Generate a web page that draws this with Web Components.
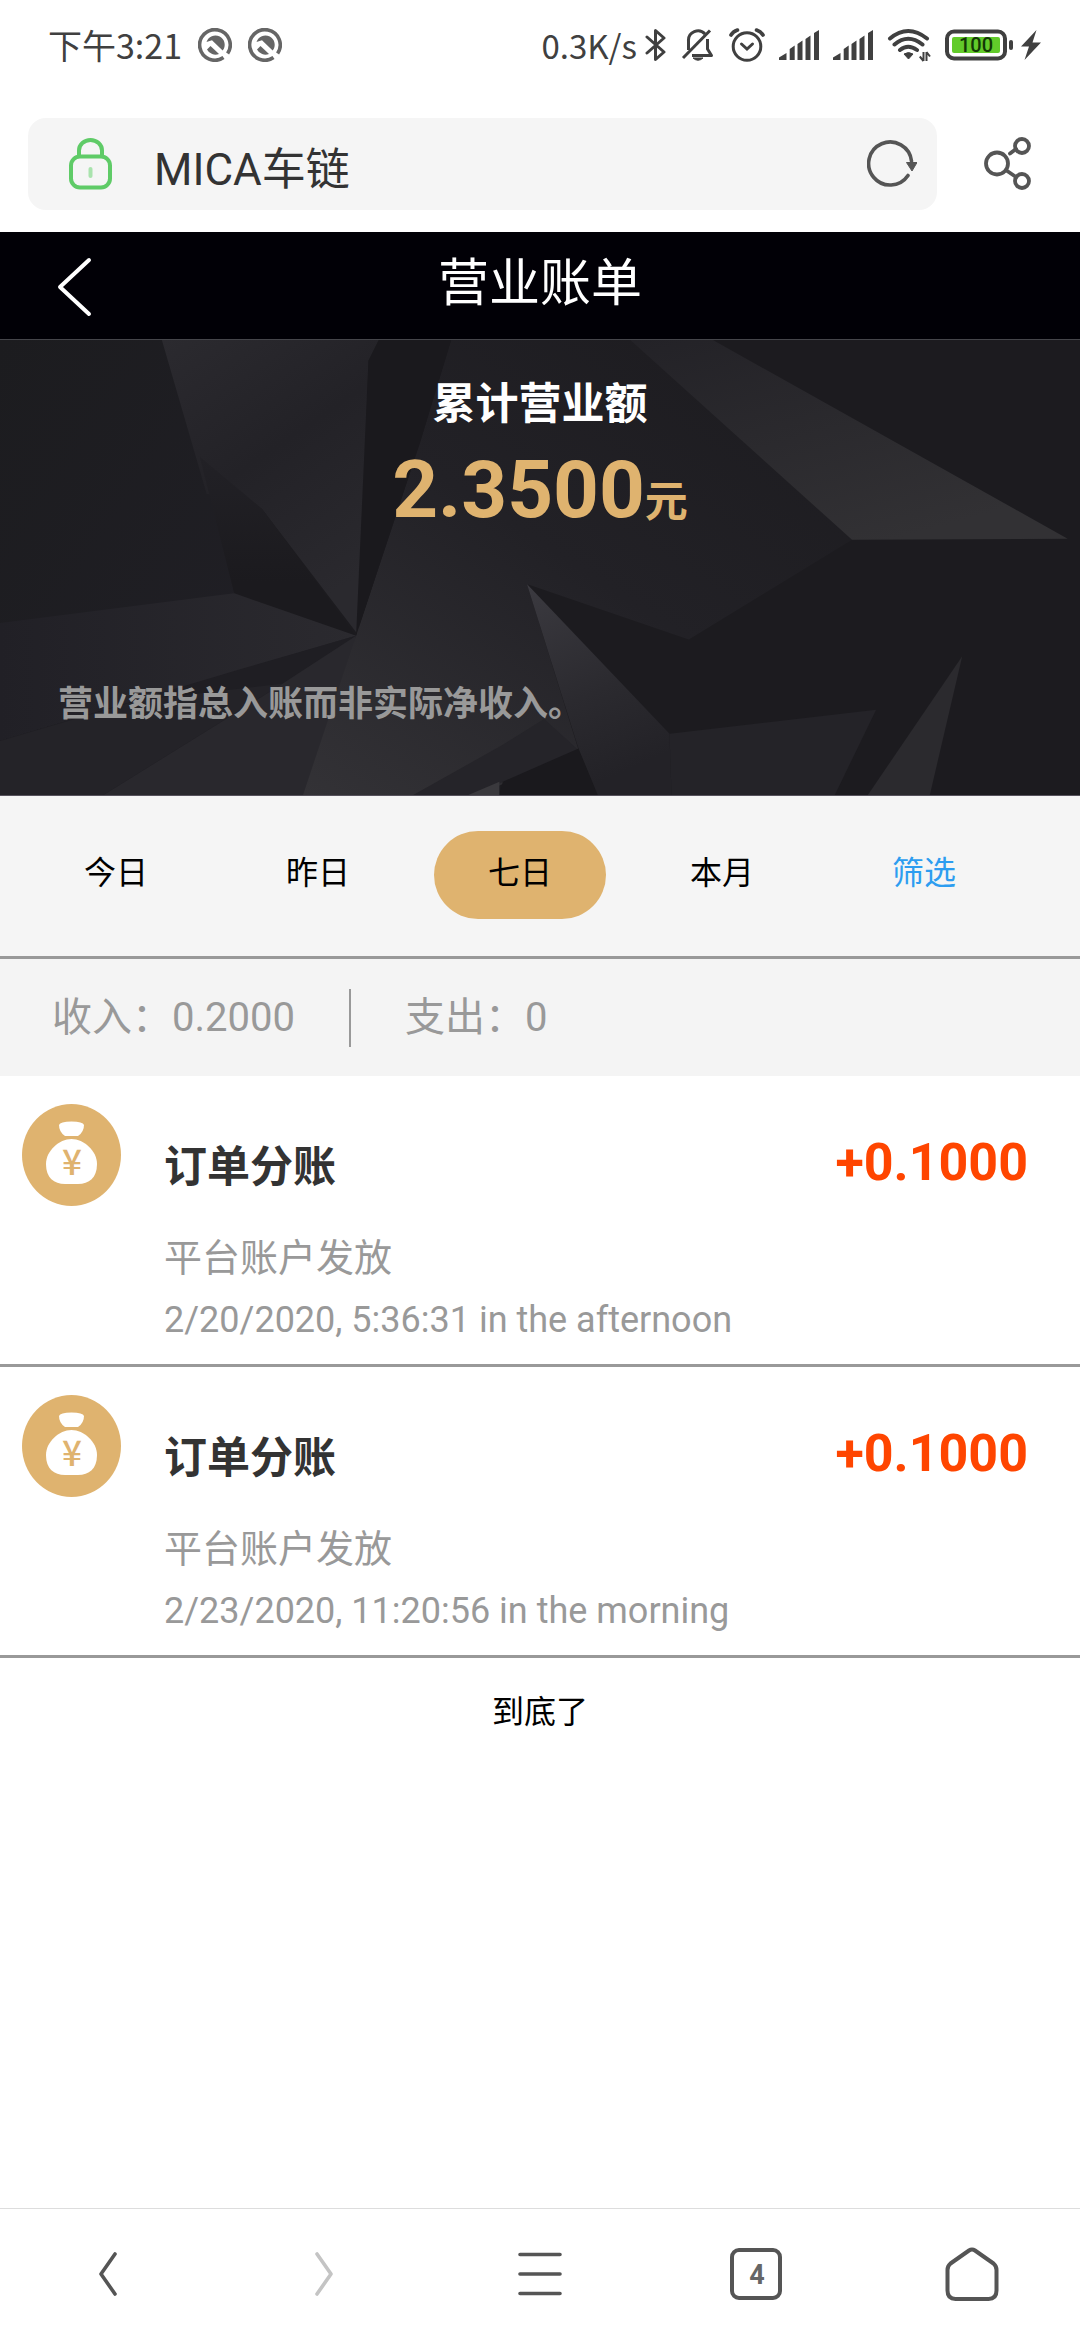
<!DOCTYPE html>
<html lang="zh-CN">
<head>
<meta charset="utf-8">
<meta name="viewport" content="width=device-width, initial-scale=1">
<title>营业账单</title>
<style>
  body { margin: 0; background: #fff; font-family: Roboto, "Noto Sans CJK SC", sans-serif; }
</style>
</head>
<body>
<bill-app></bill-app>
<script>
const define = (name, html) => {
  const template = document.createElement('template');
  template.innerHTML = '<style>*{box-sizing:border-box}button{border:0;padding:0;margin:0;background:none;font:inherit;color:inherit}svg{display:block}</style>' + html;
  customElements.define(name, class extends HTMLElement {
    constructor() {
      super();
      this.attachShadow({ mode: 'open' }).append(template.content.cloneNode(true));
    }
  });
};

define('status-bar', `
<style>
  :host { display: flex; align-items: center; justify-content: space-between; height: 90px; padding: 0 39px 0 48px;
    font: 33px/48px "Noto Sans CJK SC", sans-serif; color: #404040; }
  .side { display: flex; align-items: center; }
  .left { gap: 16px; font-size: 34px; }
  .right { gap: 14px; }
  .net { display: flex; align-items: center; gap: 8px; }
  .power { display: flex; align-items: center; gap: 8px; }
</style>
<div class="side left">
  <span>下午3:21</span>
  <svg width="34" height="34" viewBox="0 0 34 34"><path d="M25.5 29.6A15.3 15.3 0 1 1 29.6 25.5" fill="none" stroke="#666" stroke-width="3.6"/><path d="M8.5 14A9.3 9.3 0 1 1 24.6 22.6L14 12.3Z" fill="#666"/><path d="M12.5 18L21 26A9.5 9.5 0 0 1 9 21.5Z" fill="#666"/></svg>
  <svg width="34" height="34" viewBox="0 0 34 34"><path d="M25.5 29.6A15.3 15.3 0 1 1 29.6 25.5" fill="none" stroke="#666" stroke-width="3.6"/><path d="M8.5 14A9.3 9.3 0 1 1 24.6 22.6L14 12.3Z" fill="#666"/><path d="M12.5 18L21 26A9.5 9.5 0 0 1 9 21.5Z" fill="#666"/></svg>
</div>
<div class="side right">
  <div class="net"><span>0.3K/s</span>
  <svg width="22" height="34" viewBox="0 0 22 34" fill="none" stroke="#404040" stroke-width="3" stroke-linejoin="round" stroke-linecap="round"><path d="M2 9L19 24L10.5 31.5V2.5L19 10L2 25"/></svg></div>
  <svg width="34" height="34" viewBox="0 0 34 34" fill="none" stroke="#404040" stroke-width="3" stroke-linejoin="round"><path d="M7.500 22V13A9.500 9.500 0 0 1 24 6"/><path d="M26.500 11V21L30.500 27.500H11"/><path d="M2 30L29 2.500"/><path d="M12 30H22Q17 34.500 12 30Z" fill="#404040" stroke-width="1"/></svg>
  <svg width="36" height="34" viewBox="0 0 36 34" fill="none" stroke="#404040" stroke-width="3" stroke-linecap="round"><circle cx="18" cy="18.500" r="13.800"/><path d="M12.500 16L18 21L23.500 16"/><path d="M2 7Q4 3.500 8.500 2M34 7Q32 3.500 27.500 2" stroke-width="3.600"/></svg>
  <svg width="40" height="30" viewBox="0 0 40 30" fill="#404040"><path d="M0 30V27.500L7.500 23V30ZM10.700 19L15.700 15.500V30H10.700ZM18.500 14L23.500 10.500V30H18.500ZM26.500 9L31.500 5.500V30H26.500ZM35 3L40 0V30H35Z"/></svg>
  <svg width="40" height="30" viewBox="0 0 40 30" fill="#404040"><path d="M0 30V27.500L7.500 23V30ZM10.700 19L15.700 15.500V30H10.700ZM18.500 14L23.500 10.500V30H18.500ZM26.500 9L31.500 5.500V30H26.500ZM35 3L40 0V30H35Z"/></svg>
  <svg width="44" height="34" viewBox="0 0 44 34"><g fill="none" stroke="#404040" stroke-width="4" stroke-linecap="round"><path d="M3 10.500Q21 -4.500 40 10.500M7.500 16.500Q21 5 35.500 16.500M13 22Q21 15.500 30 22"/></g><path d="M17 26Q21.500 23 26 26L21.500 31Z" fill="#404040" stroke="#404040" stroke-linejoin="round"/><path d="M36.500 24V33M32.800 28.500L36.500 33M39.500 33V24M39.500 24L43 28.500" fill="none" stroke="#404040" stroke-width="2"/></svg>
  <div class="power">
  <svg width="68" height="32" viewBox="0 0 68 32"><rect x="2" y="2.500" width="58" height="27" rx="7" fill="none" stroke="#404040" stroke-width="4"/><rect x="7" y="8" width="48" height="16" rx="2" fill="#62cb2a"/><rect x="64" y="11" width="4" height="10" rx="2" fill="#404040"/><text x="31" y="23" text-anchor="middle" font-family="Roboto, sans-serif" font-weight="500" font-size="20" fill="#123806">100</text></svg>
  <svg width="20" height="30" viewBox="0 0 20 30" fill="#404040"><path d="M15.500 0L0 16.500H8L3.500 30L20 12.500H11.500Z"/></svg>
  </div>
</div>`);

define('address-bar', `
<style>
  :host { display: flex; align-items: center; gap: 46px; padding: 28px 47px 22px 28px; }
  .box { flex: 1; display: flex; align-items: center; height: 92px; padding: 0 20px 0 40px; border-radius: 18px; background: #f5f5f5; }
  input { flex: 1; min-width: 0; height: 64px; margin: 0 0 0 42px; padding: 3px 0 0; border: 0; outline: 0; background: none;
    font: 44px/60px Roboto, "Noto Sans CJK SC", sans-serif; color: #333; }
</style>
<label class="box">
  <svg width="44" height="52" viewBox="0 0 44 52" fill="none" stroke="#5fcb67" stroke-width="4"><rect x="3" y="18.500" width="39" height="31" rx="9"/><path d="M11 18V12.500A11.500 10.500 0 0 1 34 12.500V18"/><path d="M22.500 31V38" stroke="#a9e3ad" stroke-linecap="round"/></svg>
  <input type="text" value="MICA车链" aria-label="网址">
  <button aria-label="刷新"><svg width="50" height="48" viewBox="0 0 50 48"><path d="M44.500 21A21.500 21.500 0 1 0 41 35.500" fill="none" stroke="#555" stroke-width="3.600" stroke-linecap="round"/><path d="M39.500 22.500H50L45 31Z" fill="#555" stroke="#555" stroke-linejoin="round"/></svg></button>
</label>
<button aria-label="分享"><svg width="50" height="54" viewBox="0 0 50 54" fill="none" stroke="#555" stroke-width="3.800" stroke-linecap="round"><circle cx="14" cy="26.500" r="11"/><circle cx="39" cy="9" r="7"/><circle cx="39" cy="44" r="7"/><path d="M27 16.500L33 12M23.500 33.500L33 40"/></svg></button>`);

define('title-bar', `
<style>
  :host { display: grid; grid-template-columns: 148px 1fr 148px; height: 108px; background: #010006; border-bottom: 1px solid #45454a; color: #fff; }
  button { display: flex; align-items: center; padding: 2px 0 0 56px; }
  h1 { margin: 0; font-size: 51px; font-weight: 400; line-height: 104px; text-align: center; }
</style>
<button aria-label="返回"><svg width="36" height="60" viewBox="0 0 36 60" fill="none" stroke="#fff" stroke-width="4" stroke-linecap="round" stroke-linejoin="round"><path d="M33 3L4 30L33 57"/></svg></button>
<h1><slot></slot></h1>`);

define('revenue-hero', `
<style>
  :host { display: grid; height: 456px; background: #1c1b1f; border-bottom: 1px solid #56525c; overflow: hidden; font-weight: 700; color: #fff; }
  svg, .content { grid-area: 1 / 1; }
  svg { width: 100%; height: 100%; min-height: 0; }
  .content { z-index: 1; display: flex; flex-direction: column; padding: 34px 58px 0; text-align: center; }
  .label { font-size: 43px; line-height: 60px; }
  .amount { font-size: 80px; line-height: 112px; color: #dfb36f; }
  .amount small { font-size: 43px; font-weight: 600; }
  .note { margin-top: 117px; font-size: 35px; line-height: 60px; color: #999; text-align: left; }
</style>
<svg viewBox="0 324 1568 1232" preserveAspectRatio="none" aria-hidden="true">
  <defs>
    <linearGradient id="a" x1="0" y1="0" x2=".5" y2="1"><stop stop-color="#2b2a2f"/><stop offset=".5" stop-color="#232227"/><stop offset="1" stop-color="#2a292e"/></linearGradient>
    <linearGradient id="b" x1=".8" y1="0" x2="0" y2="1"><stop stop-color="#1d1c20"/><stop offset=".45" stop-color="#222126"/><stop offset="1" stop-color="#333236"/></linearGradient>
    <linearGradient id="c" x1="0" y1="0" x2=".6" y2="1"><stop stop-color="#232227"/><stop offset="1" stop-color="#323134"/></linearGradient>
    <linearGradient id="d" x1="0" y1="0" x2=".3" y2="1"><stop stop-color="#3b3a40"/><stop offset=".6" stop-color="#2b2a2f"/><stop offset="1" stop-color="#232227"/></linearGradient>
    <linearGradient id="e" x1="0" y1="0" x2="1" y2="0"><stop stop-color="#212026"/><stop offset="1" stop-color="#2b2a2f"/></linearGradient>
    <linearGradient id="f" x1="0" y1="0" x2="1" y2="1"><stop stop-color="#1c1c1f"/><stop offset="1" stop-color="#201f25"/></linearGradient>
    <linearGradient id="g" x1="0" y1="0" x2="0" y2="1"><stop stop-color="#222126"/><stop offset=".7" stop-color="#1b1a1e"/></linearGradient>
  </defs>
  <path d="M0 324H240L320 820L340 1010L0 1300Z" fill="url(#f)"/>
  <path d="M235 324H550L535 380L521 1125L380 780L300 740Z" fill="url(#a)"/>
  <path d="M290 640L380 780L517 1125L340 1010Z" fill="url(#g)"/>
  <path d="M340 1010L517 1125L0 1410V1090Z" fill="url(#e)"/>
  <path d="M517 1125L0 1410V1556H460Z" fill="#29282d"/>
  <path d="M517 1125L350 1215L0 1410V1556H150L410 1255Z" fill="#1f1e23"/>
  <path d="M0 1410L200 1300L410 1255L150 1556H0Z" fill="#242328"/>
  <path d="M655 324H915L1237 865L1000 1135L765 985L840 1435L725 1530L600 1556H440L517 1125L610 600Z" fill="url(#b)"/>
  <path d="M550 324H655L610 600L517 1125L535 380Z" fill="#1a191d"/>
  <path d="M790 1350L840 1435L725 1525L690 1556H600L730 1420Z" fill="#252429"/>
  <path d="M840 1430L868 1556H725L730 1520Z" fill="#1a191d"/>
  <path d="M725 1520V1556H680Z" fill="#3a393d"/>
  <path d="M915 324H1035L1550 862L1237 865Z" fill="url(#c)"/>
  <path d="M765 985L972 1390L975 1556H868L840 1430Z" fill="url(#d)"/>
  <path d="M972 1390L1272 1325L1212 1556H975Z" fill="#242328"/>
  <path d="M1397 1180L1350 1556H1260Z" fill="#2b2a2e"/>
</svg>
<div class="content">
  <div class="label">累计营业额</div>
  <div class="amount">2.3500<small>元</small></div>
  <div class="note">营业额指总入账而非实际净收入。</div>
</div>`);

define('period-tabs', `
<style>
  :host { display: flex; height: 163px; padding: 35px 15px 0; background: #f5f5f5; border-bottom: 3px solid #999; font-size: 32px; color: #000; }
  button { width: 172px; height: 88px; margin: 0 15px; padding-bottom: 4px; border-radius: 44px; line-height: 84px; }
  .on { background: #dfb36f; }
  .filter { color: #2d9df0; }
</style>
<button>今日</button><button>昨日</button><button class="on" aria-pressed="true">七日</button><button>本月</button><button class="filter">筛选</button>`);

define('totals-row', `
<style>
  :host { display: flex; align-items: center; height: 117px; padding: 0 52px; background: #f4f4f4; font-size: 40px; line-height: 58px; color: #999; }
  .out { margin-left: 54px; padding-left: 54px; border-left: 2px solid #999; }
</style>
<div>收入：0.2000</div><div class="out">支出：0</div>`);

define('bill-item', `
<style>
  :host { display: flex; height: 291px; padding: 0 52px 0 22px; border-bottom: 3px solid #999; color: #999; line-height: 60px; }
  svg { flex: none; margin: 28px 43px 0 0; }
  .body { flex: 1; padding-top: 61px; }
  .head { display: flex; justify-content: space-between; margin-bottom: 31px; font-weight: 700; }
  .title { font-size: 43px; color: #333; }
  .amount { font-size: 52px; line-height: 52px; color: #ff4500; }
  .source { font-size: 38px; }
  .time { margin-top: 2px; font-size: 36px; }
</style>
<svg width="99" height="102" viewBox="0 0 99 102"><ellipse cx="49.500" cy="51" rx="49.500" ry="51" fill="#dfb36f"/><path d="M37 21Q38 17.500 49.500 17.500T62 21Q62 28 56 32H43Q37 28 37 21Z" fill="#fff"/><path d="M49.500 35C62 35 75 47 75 60C75 74 67 80 56 80H43C32 80 24 74 24 60C24 47 37 35 49.500 35Z" fill="#fff"/><text x="50" y="71" text-anchor="middle" font-family="Noto Sans CJK SC, sans-serif" font-size="35" font-weight="500" fill="#dfb36f">¥</text></svg>
<div class="body">
  <div class="head"><span class="title"><slot name="title"></slot></span><span class="amount"><slot name="amount"></slot></span></div>
  <div class="source"><slot name="source"></slot></div>
  <div class="time"><slot name="time"></slot></div>
</div>`);

define('browser-nav', `
<style>
  :host { display: flex; height: 132px; border-top: 1px solid #ddd; }
  button { flex: 1; display: flex; align-items: center; justify-content: center; padding-bottom: 2px; }
</style>
<button aria-label="后退"><svg width="20" height="44" viewBox="0 0 20 44" fill="none" stroke="#555" stroke-width="3.600" stroke-linecap="round" stroke-linejoin="round"><path d="M17 2L3 22L17 42"/></svg></button>
<button aria-label="前进" disabled><svg width="20" height="44" viewBox="0 0 20 44" fill="none" stroke="#c4c4c4" stroke-width="3.600" stroke-linecap="round" stroke-linejoin="round"><path d="M3 2L17 22L3 42"/></svg></button>
<button aria-label="菜单"><svg width="44" height="44" viewBox="0 0 44 44" stroke="#555" stroke-width="3.600" stroke-linecap="round"><path d="M2 2.500H42M2 22H42M2 41.500H42"/></svg></button>
<button aria-label="标签页"><svg width="52" height="52" viewBox="0 0 52 52"><rect x="2" y="2" width="48" height="48" rx="7" fill="none" stroke="#555" stroke-width="4"/><text x="27" y="36" text-anchor="middle" font-family="Roboto, sans-serif" font-size="27" font-weight="700" fill="#666">4</text></svg></button>
<button aria-label="主页"><svg width="54" height="54" viewBox="0 0 54 54" fill="none" stroke="#555" stroke-width="4" stroke-linejoin="round"><path d="M24 3.500Q27 1.500 30 3.500L48.500 16.500Q51.500 19 51.500 23V43.500Q51.500 52 43.500 52H10.500Q2.500 52 2.500 43.500V23Q2.500 19 5.500 16.500Z"/></svg></button>`);

define('bill-app', `
<style>
  :host { display: flex; flex-direction: column; min-height: 100vh; }
  main { flex: 1; }
  .end { margin: 0; padding-top: 24px; font-size: 32px; line-height: 60px; text-align: center; color: #000; }
</style>
<status-bar></status-bar>
<address-bar></address-bar>
<main>
  <title-bar>营业账单</title-bar>
  <revenue-hero></revenue-hero>
  <period-tabs></period-tabs>
  <totals-row></totals-row>
  <bill-item><span slot="title">订单分账</span><span slot="amount">+0.1000</span><span slot="source">平台账户发放</span><span slot="time">2/20/2020, 5:36:31 in the afternoon</span></bill-item>
  <bill-item><span slot="title">订单分账</span><span slot="amount">+0.1000</span><span slot="source">平台账户发放</span><span slot="time">2/23/2020, 11:20:56 in the morning</span></bill-item>
  <p class="end">到底了</p>
</main>
<browser-nav></browser-nav>`);
</script>
</body>
</html>
